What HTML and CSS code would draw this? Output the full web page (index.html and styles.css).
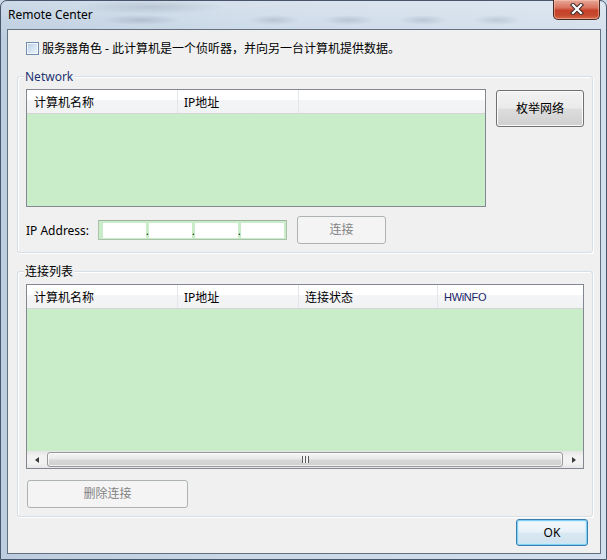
FILE: index.html
```html
<!DOCTYPE html>
<html lang="zh-CN">
<head>
    <meta charset="UTF-8">
    <title>Remote Center</title>
    <link rel="stylesheet" href="styles.css">
</head>
<body>
    <div class="window">
        <div class="titlebar">
            <span class="title">Remote Center</span>
            <button class="close" type="button">
                <svg width="14" height="12" viewBox="0 0 14 12">
                    <path d="M3 2 L11 10 M11 2 L3 10" stroke="#3a2a28" stroke-width="4.2" stroke-linecap="square" fill="none"/>
                    <path d="M3 2 L11 10 M11 2 L3 10" stroke="#ffffff" stroke-width="2.2" stroke-linecap="square" fill="none"/>
                </svg>
            </button>
        </div>

        <div class="client">
            <label class="server-role">
                <span class="checkbox"></span>
                服务器角色 - 此计算机是一个侦听器，并向另一台计算机提供数据。
            </label>

            <div class="group group-network">
                <span class="group-title title-blue">Network</span>
                <div class="network-row">
                    <div class="listview list-network">
                        <div class="lv-header">
                            <div class="lv-col col-name">计算机名称</div>
                            <div class="lv-col col-ip">IP地址</div>
                            <div class="lv-col col-fill"></div>
                        </div>
                        <div class="lv-body"></div>
                    </div>
                    <button class="btn btn-enum" type="button">枚举网络</button>
                </div>
                <div class="ip-row">
                    <span class="ip-label">IP Address:</span>
                    <div class="ip-box">
                        <span class="ip-field"></span><span class="ip-dot">.</span>
                        <span class="ip-field"></span><span class="ip-dot">.</span>
                        <span class="ip-field"></span><span class="ip-dot">.</span>
                        <span class="ip-field"></span>
                    </div>
                    <button class="btn btn-connect" type="button" disabled>连接</button>
                </div>
            </div>

            <div class="group group-conn">
                <span class="group-title">连接列表</span>
                <div class="listview list-conn">
                    <div class="lv-header">
                        <div class="lv-col col-name">计算机名称</div>
                        <div class="lv-col col-ip">IP地址</div>
                        <div class="lv-col col-state">连接状态</div>
                        <div class="lv-col col-fill hw">HWiNFO</div>
                    </div>
                    <div class="lv-body"></div>
                    <div class="hscroll">
                        <span class="sb-arrow"><i class="tri-left"></i></span>
                        <span class="sb-thumb"><i class="grip"></i></span>
                        <span class="sb-arrow"><i class="tri-right"></i></span>
                    </div>
                </div>
                <button class="btn btn-delete" type="button" disabled>删除连接</button>
            </div>

            <div class="footer">
                <button class="btn btn-default" type="button">OK</button>
            </div>
        </div>
    </div>
</body>
</html>
```

FILE: styles.css
```css
* {
    margin: 0;
    padding: 0;
    box-sizing: border-box;
}

body {
    width: 607px;
    height: 560px;
    overflow: hidden;
    font-family: "Noto Sans", "Noto Sans CJK SC", sans-serif;
    font-size: 12px;
    line-height: 16px;
    color: #000;
    background: #c9d7e6;
}

/* glass frame */
.window {
    height: 560px;
    display: flex;
    flex-direction: column;
    border: 1px solid #47566a;
    border-radius: 7px 7px 0 0;
    background:
        radial-gradient(ellipse 75px 7px at 150px 6px, rgba(80, 95, 115, 0.18), transparent),
        radial-gradient(ellipse 40px 5px at 140px 19px, rgba(80, 95, 115, 0.22), transparent),
        radial-gradient(ellipse 26px 5px at 273px 19px, rgba(80, 95, 115, 0.2), transparent),
        radial-gradient(ellipse 26px 5px at 347px 19px, rgba(80, 95, 115, 0.2), transparent),
        radial-gradient(ellipse 24px 5px at 422px 19px, rgba(80, 95, 115, 0.2), transparent),
        radial-gradient(ellipse 24px 5px at 496px 19px, rgba(80, 95, 115, 0.18), transparent),
        linear-gradient(180deg, rgba(255, 255, 255, 0.25), rgba(255, 255, 255, 0) 40px),
        linear-gradient(90deg, #bccddf 0%, #cad8e7 40%, #d3dfec 100%);
}

.titlebar {
    height: 28px;
    display: flex;
    justify-content: space-between;
    align-items: flex-start;
    padding-left: 7px;
}

.title {
    padding-top: 6px;
    color: #000;
}

.close {
    width: 47px;
    height: 20px;
    margin-top: -1px;
    margin-right: 6px;
    border: 1px solid #4b2a24;
    border-top: none;
    border-radius: 0 0 5px 5px;
    background: linear-gradient(#e8a899 0%, #d9745f 40%, #c7412a 55%, #c54a2e 80%, #d86c4c 100%);
    box-shadow: inset 0 0 0 1px rgba(255, 210, 190, 0.45);
    display: flex;
    align-items: center;
    justify-content: center;
    padding-bottom: 1px;
}

/* client area */
.client {
    flex: 1;
    margin: 0 5px 5px 6px;
    border: 1px solid #62707f;
    background: #f0f0f0;
    display: flex;
    flex-direction: column;
    padding-top: 12px;
}

.server-role {
    display: flex;
    align-items: center;
    gap: 3px;
    height: 13px;
    margin-left: 18px;
    white-space: nowrap;
}

.checkbox {
    width: 13px;
    height: 13px;
    flex: none;
    border: 1px solid #6f8eae;
    background: linear-gradient(135deg, #b3cce6 0%, #dbe8f5 60%, #f1f6fb 100%);
    box-shadow: inset 0 0 0 1px #f4f8fc;
}

/* group boxes */
.group {
    position: relative;
    margin: 0 7px 0 9px;
    padding: 12px 8px 8px 8px;
    border: 1px solid #d5dfe5;
    border-radius: 3px;
    box-shadow: inset 1px 1px 0 #fff, 1px 1px 0 #fff;
}

.group-network {
    margin-top: 21px;
}

.group-conn {
    margin-top: 18px;
}

.group-title {
    position: absolute;
    top: -8px;
    left: 6px;
    padding: 0 1px;
    background: #f0f0f0;
}

.title-blue {
    color: #1c3372;
}

/* list views */
.listview {
    border: 1px solid #828790;
    background: #c8edc8;
    display: flex;
    flex-direction: column;
}

.lv-header {
    display: flex;
    height: 24px;
    flex: none;
    background: linear-gradient(#ffffff 0%, #ffffff 42%, #f4f5f7 46%, #f1f2f4 100%);
    border-bottom: 1px solid #d5d5d5;
}

.lv-col {
    padding-top: 2px;
    padding-left: 6px;
    line-height: 21px;
    border-right: 1px solid #e3e6ea;
    white-space: nowrap;
}

.col-name {
    width: 151px;
    padding-left: 7px;
}

.col-ip {
    width: 121px;
}

.col-state {
    width: 139px;
}

.col-fill {
    flex: 1;
    border-right: none;
}

.hw {
    color: #1a2466;
    font-family: "Liberation Sans", sans-serif;
    font-size: 11px;
    letter-spacing: -0.3px;
}

.lv-body {
    flex: 1;
}

.network-row {
    display: flex;
    align-items: flex-start;
    gap: 10px;
}

.list-network {
    width: 460px;
    height: 118px;
}

.list-conn {
    height: 185px;
}

/* horizontal scroll bar */
.hscroll {
    height: 17px;
    flex: none;
    display: flex;
    background: linear-gradient(#e4e4e4, #f2f2f2 30%, #f2f2f2 70%, #e6e6e6);
}

.sb-arrow {
    width: 19px;
    display: flex;
    align-items: center;
    justify-content: center;
}

.tri-left {
    width: 0;
    height: 0;
    border-top: 3px solid transparent;
    border-bottom: 3px solid transparent;
    border-right: 4px solid #3a3a3a;
}

.tri-right {
    width: 0;
    height: 0;
    border-top: 3px solid transparent;
    border-bottom: 3px solid transparent;
    border-left: 4px solid #3a3a3a;
}

.sb-thumb {
    flex: 1;
    margin: 1px 1px;
    border: 1px solid #989898;
    border-radius: 3px;
    background: linear-gradient(#f6f6f6 0%, #e9e9e9 45%, #d7d7d7 55%, #cfcfcf 100%);
    box-shadow: inset 0 0 0 1px rgba(255, 255, 255, 0.7);
    display: flex;
    align-items: center;
    justify-content: center;
}

.grip {
    width: 7px;
    height: 7px;
    background: repeating-linear-gradient(90deg, #5a5a5a 0, #5a5a5a 1px, #f4f4f4 1px, #f4f4f4 3px);
}

/* ip row */
.ip-row {
    display: flex;
    align-items: center;
    height: 28px;
    margin-top: 9px;
}

.ip-label {
    width: 72px;
    padding-top: 1px;
}

.ip-box {
    width: 189px;
    height: 20px;
    display: flex;
    padding: 2px 2px 1px 4px;
    border: 1px solid #a9c2a9;
    border-top-color: #9fb09f;
    background: #c8edc8;
}

.ip-field {
    width: 43px;
    background: #fff;
}

.ip-dot {
    width: 3px;
    font-size: 10px;
    line-height: 17px;
    overflow: visible;
}

/* buttons */
.btn {
    font: inherit;
    color: #000;
    border: 1px solid #707070;
    border-radius: 3px;
    background: linear-gradient(#f2f2f2 0%, #ebebeb 48%, #dddddd 52%, #cfcfcf 100%);
    box-shadow: inset 0 0 0 1px #fbfbfb;
}

.btn:disabled {
    color: #838383;
    border-color: #adb2b5;
    background: #f4f4f4;
    box-shadow: none;
}

.btn-enum {
    width: 88px;
    height: 37px;
    margin-top: 1px;
}

.btn-connect {
    width: 89px;
    height: 28px;
    margin-left: 10px;
}

.btn-delete {
    width: 161px;
    height: 28px;
    margin-top: 11px;
    margin-left: 1px;
}

.footer {
    display: flex;
    justify-content: flex-end;
    margin-top: 2px;
    padding-right: 12px;
}

.btn-default {
    width: 72px;
    height: 27px;
    border-color: #3c7fb1;
    background: linear-gradient(#f3f8fb 0%, #e9f2f8 48%, #d9e8f2 52%, #cfe2ef 100%);
    box-shadow: inset 0 0 0 1px #7fd0f5, inset 0 0 0 2px rgba(190, 235, 252, 0.6);
}
```
